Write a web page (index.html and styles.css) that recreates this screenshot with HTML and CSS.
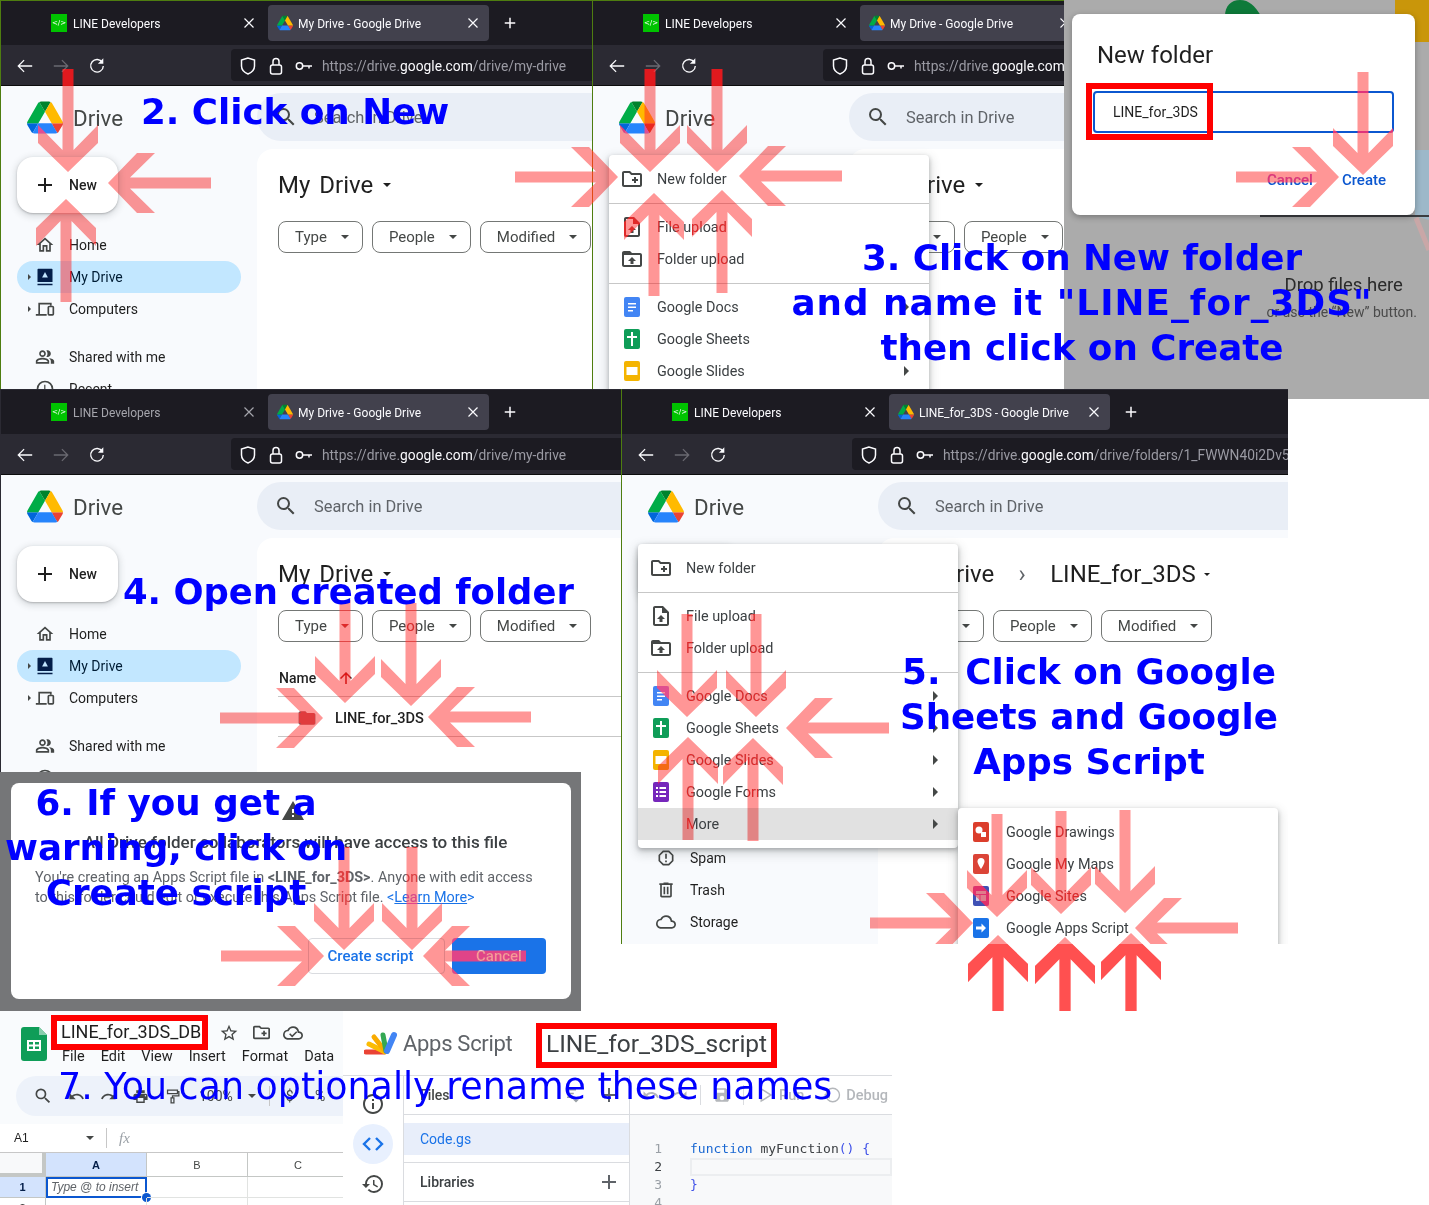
FILE: index.html
```html
<!DOCTYPE html>
<html lang="en">
<head>
    <meta charset="UTF-8">
    <title>LINE for 3DS setup steps</title>
    <link rel="stylesheet" href="styles.css">
</head>
<body>
<svg class="sprite" aria-hidden="true">
    <symbol id="i-drive" viewBox="0 0 87.3 78">
        <path d="m6.6 66.85 3.85 6.65c.8 1.4 1.95 2.5 3.3 3.3l13.75-23.8h-27.5c0 1.55.4 3.1 1.2 4.5z" fill="#0066da"/>
        <path d="m43.65 25-13.75-23.8c-1.35.8-2.5 1.9-3.3 3.3l-25.4 44a9.06 9.06 0 0 0 -1.2 4.5h27.5z" fill="#00ac47"/>
        <path d="m73.55 76.8c1.35-.8 2.5-1.9 3.3-3.3l1.6-2.75 7.65-13.25c.8-1.4 1.2-2.95 1.2-4.5h-27.502l5.852 11.5z" fill="#ea4335"/>
        <path d="m43.65 25 13.75-23.8c-1.35-.8-2.9-1.2-4.5-1.2h-18.5c-1.6 0-3.15.45-4.5 1.2z" fill="#00832d"/>
        <path d="m59.8 53h-32.3l-13.75 23.8c1.35.8 2.9 1.2 4.5 1.2h50.8c1.6 0 3.15-.45 4.5-1.2z" fill="#2684fc"/>
        <path d="m73.4 26.5-12.7-22c-.8-1.4-1.95-2.5-3.3-3.3l-13.75 23.8 16.15 28h27.45c0-1.55-.4-3.1-1.2-4.5z" fill="#ffba00"/>
    </symbol>
    <symbol id="i-back" viewBox="0 0 20 20"><path d="M18 10H3M9 3.5 2.5 10 9 16.5" fill="none" stroke="currentColor" stroke-width="1.4"/></symbol>
    <symbol id="i-forward" viewBox="0 0 20 20"><path d="M2 10h15M11 3.5l6.5 6.5-6.5 6.5" fill="none" stroke="currentColor" stroke-width="1.4"/></symbol>
    <symbol id="i-reload" viewBox="0 0 20 20"><path d="M16 6.2A7 7 0 1 0 17 10" fill="none" stroke="currentColor" stroke-width="1.5"/><path d="M17 1.5v6h-6z" fill="currentColor"/></symbol>
    <symbol id="i-shield" viewBox="0 0 20 20"><path d="M10 2 3.5 4v6c0 4 3 6.600 6.500 8 3.500-1.400 6.500-4 6.500-8V4z" fill="none" stroke="currentColor" stroke-width="1.5"/></symbol>
    <symbol id="i-lock" viewBox="0 0 20 20"><rect x="4.500" y="9" width="11" height="9" rx="2" fill="none" stroke="currentColor" stroke-width="1.500"/><path d="M7 9V5.500a3 3 0 0 1 6 0V9" fill="none" stroke="currentColor" stroke-width="1.500"/></symbol>
    <symbol id="i-key" viewBox="0 0 20 20"><circle cx="5.500" cy="10" r="3.200" fill="none" stroke="currentColor" stroke-width="1.500"/><path d="M9 10h9M15 10v2.500" fill="none" stroke="currentColor" stroke-width="1.500"/></symbol>
    <symbol id="i-x" viewBox="0 0 12 12"><path d="M1.500 1.500l9 9M10.500 1.500l-9 9" fill="none" stroke="currentColor" stroke-width="1.200"/></symbol>
    <symbol id="i-search" viewBox="0 0 24 24"><path d="M15.500 14h-.79l-.28-.27A6.470 6.470 0 0 0 16 9.500 6.500 6.500 0 1 0 9.500 16c1.610 0 3.090-.59 4.230-1.570l.27.28v.79l5 4.990L20.490 19l-4.990-5zm-6 0C7.010 14 5 11.990 5 9.500S7.010 5 9.500 5 14 7.010 14 9.500 11.990 14 9.500 14z"/></symbol>
    <symbol id="i-plus" viewBox="0 0 24 24"><path d="M19 13h-6v6h-2v-6H5v-2h6V5h2v6h6v2z"/></symbol>
    <symbol id="i-up" viewBox="0 0 24 24"><path d="M4 12l1.410 1.410L11 7.830V20h2V7.830l5.580 5.590L20 12l-8-8-8 8z"/></symbol>
    <symbol id="i-home" viewBox="0 0 24 24"><path d="M12 5.690l5 4.500V18h-2v-6H9v6H7v-7.810l5-4.500M12 3L2 12h3v8h6v-6h2v6h6v-8h3L12 3z"/></symbol>
    <symbol id="i-mydrive" viewBox="0 0 24 24"><path d="M4 2h16a1 1 0 0 1 1 1v15H3V3a1 1 0 0 1 1-1zM3 20h18v2H3z"/><path d="M12 6l3.500 6.500h-7z" fill="#c2e7ff"/></symbol>
    <symbol id="i-computers" viewBox="0 0 24 24"><path d="M5 18V5.500h14V8M1 19h13" fill="none" stroke="currentColor" stroke-width="2"/><rect x="16" y="9" width="6" height="10" rx="1" fill="none" stroke="currentColor" stroke-width="2"/></symbol>
    <symbol id="i-people" viewBox="0 0 24 24"><path d="M16.670 13.130C18.040 14.060 19 15.320 19 17v3h4v-3c0-2.180-3.570-3.470-6.330-3.870zM15 12c2.210 0 4-1.790 4-4s-1.790-4-4-4c-.47 0-.91.1-1.330.24C14.500 5.270 15 6.580 15 8s-.5 2.730-1.330 3.760c.42.14.86.24 1.330.24zM9 12c2.210 0 4-1.790 4-4s-1.790-4-4-4-4 1.790-4 4 1.790 4 4 4zm0-6c1.100 0 2 .9 2 2s-.9 2-2 2-2-.9-2-2 .9-2 2-2zM9 13c-2.670 0-8 1.340-8 4v3h16v-3c0-2.660-5.330-4-8-4zm6 5H3v-.99C3.200 16.290 6.300 15 9 15s5.800 1.290 6 2v1z"/></symbol>
    <symbol id="i-recent" viewBox="0 0 24 24"><path d="M12 2a10 10 0 1 0 0 20 10 10 0 0 0 0-20zm0 18a8 8 0 1 1 0-16 8 8 0 0 1 0 16zm.5-13H11v6l5.200 3.200.8-1.300-4.500-2.700z"/></symbol>
    <symbol id="i-star" viewBox="0 0 24 24"><path d="M22 9.240l-7.190-.62L12 2 9.190 8.630 2 9.240l5.460 4.730L5.820 21 12 17.270 18.180 21l-1.630-7.030L22 9.240zM12 15.400l-3.760 2.270 1-4.280-3.320-2.880 4.380-.38L12 6.100l1.710 4.040 4.380.38-3.320 2.880 1 4.280L12 15.400z"/></symbol>
    <symbol id="i-spam" viewBox="0 0 24 24"><path d="M15.730 3H8.270L3 8.270v7.460L8.270 21h7.460L21 15.730V8.270L15.730 3zM19 14.900L14.900 19H9.100L5 14.900V9.100L9.100 5h5.800L19 9.100v5.800zM11 7h2v6h-2zM11 15h2v2h-2z"/></symbol>
    <symbol id="i-trash" viewBox="0 0 24 24"><path d="M15 4V3H9v1H4v2h1v13c0 1.100.9 2 2 2h10c1.100 0 2-.9 2-2V6h1V4h-5zm2 15H7V6h10v13zM9 8h2v9H9zm4 0h2v9h-2z"/></symbol>
    <symbol id="i-cloud" viewBox="0 0 24 24"><path d="M12 6c2.620 0 4.880 1.860 5.390 4.430l.3 1.500 1.530.11A2.980 2.980 0 0 1 22 15c0 1.650-1.350 3-3 3H6c-2.210 0-4-1.790-4-4 0-2.050 1.530-3.760 3.560-3.970l1.070-.11.5-.95A5.469 5.469 0 0 1 12 6m0-2C9.110 4 6.600 5.640 5.350 8.040 2.340 8.360 0 10.910 0 14c0 3.310 2.690 6 6 6h13c2.760 0 5-2.240 5-5 0-2.640-2.050-4.780-4.650-4.960A7.490 7.490 0 0 0 12 4z"/></symbol>
    <symbol id="i-cloud-done" viewBox="0 0 24 24"><path d="M12 6c2.620 0 4.880 1.860 5.390 4.430l.3 1.500 1.530.11A2.980 2.980 0 0 1 22 15c0 1.650-1.350 3-3 3H6c-2.210 0-4-1.790-4-4 0-2.050 1.530-3.760 3.560-3.970l1.070-.11.5-.95A5.469 5.469 0 0 1 12 6m0-2C9.110 4 6.600 5.640 5.350 8.040 2.340 8.360 0 10.910 0 14c0 3.310 2.690 6 6 6h13c2.760 0 5-2.240 5-5 0-2.640-2.050-4.780-4.650-4.960A7.490 7.490 0 0 0 12 4z"/><path d="M8 13l3 3 5.500-5.500" fill="none" stroke="currentColor" stroke-width="1.800"/></symbol>
    <symbol id="i-newfolder" viewBox="2 2 20 20"><path d="M20 6h-8l-2-2H4c-1.110 0-1.990.89-1.990 2L2 18c0 1.110.89 2 2 2h16c1.110 0 2-.89 2-2V8c0-1.110-.89-2-2-2zm0 12H4V6h5.170l2 2H20v10zm-8-4h2v2h2v-2h2v-2h-2v-2h-2v2h-2z"/></symbol>
    <symbol id="i-fileup" viewBox="2 2 20 20"><path fill-rule="evenodd" d="M14 2H6c-1.100 0-2 .9-2 2v16c0 1.100.9 2 2 2h12c1.100 0 2-.9 2-2V8l-6-6zm4 18H6V4h7v5h5v11zM8 15h2.500v3h3v-3H16l-4-4z"/></symbol>
    <symbol id="i-folderup" viewBox="2 2 20 20"><path fill-rule="evenodd" d="M20 6h-8l-2-2H4c-1.100 0-2 .9-2 2v12c0 1.100.9 2 2 2h16c1.100 0 2-.9 2-2V8c0-1.100-.9-2-2-2zm0 12H4V8h16v10zM8 14h2.500v3h3v-3H16l-4-4z"/></symbol>
    <symbol id="i-folder" viewBox="0 0 24 24"><path d="M10 4H4c-1.100 0-2 .9-2 2v12c0 1.100.9 2 2 2h16c1.100 0 2-.9 2-2V8c0-1.100-.9-2-2-2h-8l-2-2z"/></symbol>
    <symbol id="i-docs" viewBox="0 0 16 20"><rect width="16" height="20" rx="2" fill="#4285f4"/><path d="M4 6h8v1.500H4zM4 9.500h8V11H4zM4 13h5v1.500H4z" fill="#fff"/></symbol>
    <symbol id="i-sheets" viewBox="0 0 16 20"><rect width="16" height="20" rx="2" fill="#0f9d58"/><path d="M7 3h2v4h4v2H9v8H7V9H3V7h4z" fill="#fff"/></symbol>
    <symbol id="i-slides" viewBox="0 0 16 20"><rect width="16" height="20" rx="2" fill="#f4b400"/><rect x="2.500" y="6" width="11" height="8" fill="#fff"/></symbol>
    <symbol id="i-forms" viewBox="0 0 16 20"><rect width="16" height="20" rx="2" fill="#7627bb"/><path d="M3 5h2v2H3zM6.500 5H13v2H6.500zM3 9h2v2H3zM6.500 9H13v2H6.500zM3 13h2v2H3zM6.500 13H13v2H6.500z" fill="#fff"/></symbol>
    <symbol id="i-drawings" viewBox="0 0 16 20"><rect width="16" height="20" rx="2" fill="#db3e2c"/><circle cx="6" cy="8" r="3.500" fill="#fff"/><rect x="8" y="10" width="5" height="5" fill="#fff"/></symbol>
    <symbol id="i-maps" viewBox="0 0 16 20"><rect width="16" height="20" rx="2" fill="#db4437"/><path d="M8 4a3.500 3.500 0 0 1 3.500 3.500C11.500 10 8 15 8 15S4.500 10 4.500 7.500A3.500 3.500 0 0 1 8 4z" fill="#fff"/></symbol>
    <symbol id="i-sites" viewBox="0 0 16 20"><rect width="16" height="20" rx="2" fill="#3f51b5"/><path d="M3 5h10v3H3zM3 9h3.500v6H3zM7.500 9H13v6H7.500z" fill="#fff" fill-opacity=".75"/></symbol>
    <symbol id="i-gas" viewBox="0 0 16 20"><rect width="16" height="20" rx="2" fill="#1a73e8"/><path d="M3 8.500h5.500V5.500L13 10l-4.500 4.500v-3H3z" fill="#fff"/></symbol>
    <symbol id="i-warning" viewBox="0 0 24 24"><path d="M1 21h22L12 2 1 21zm12-3h-2v-2h2v2zm0-4h-2v-4h2v4z"/></symbol>
    <symbol id="i-undo" viewBox="0 0 24 24"><path d="M12.500 8c-2.650 0-5.050.99-6.900 2.600L2 7v9h9l-3.620-3.620c1.390-1.160 3.160-1.880 5.120-1.880 3.540 0 6.550 2.310 7.600 5.500l2.370-.78C21.080 11.030 17.150 8 12.500 8z"/></symbol>
    <symbol id="i-redo" viewBox="0 0 24 24"><path d="M18.400 10.600C16.550 8.990 14.150 8 11.500 8c-4.650 0-8.580 3.030-9.960 7.220L3.900 16c1.050-3.190 4.050-5.500 7.600-5.500 1.950 0 3.730.72 5.120 1.880L13 16h9V7l-3.600 3.600z"/></symbol>
    <symbol id="i-print" viewBox="0 0 24 24"><path d="M19 8H5c-1.660 0-3 1.340-3 3v6h4v4h12v-4h4v-6c0-1.660-1.340-3-3-3zm-3 11H8v-5h8v5zm3-7c-.55 0-1-.45-1-1s.45-1 1-1 1 .45 1 1-.45 1-1 1zm-1-9H6v4h12V3z"/></symbol>
    <symbol id="i-paint" viewBox="0 0 24 24"><path d="M5 3h14v5H5zM19 5h2v6h-9v3M10 14h4v7h-4z" fill="none" stroke="currentColor" stroke-width="1.800"/></symbol>
    <symbol id="i-info" viewBox="0 0 24 24"><path d="M11 7h2v2h-2zm0 4h2v6h-2zm1-9C6.480 2 2 6.480 2 12s4.480 10 10 10 10-4.480 10-10S17.520 2 12 2zm0 18c-4.410 0-8-3.590-8-8s3.590-8 8-8 8 3.590 8 8-3.590 8-8 8z"/></symbol>
    <symbol id="i-code" viewBox="0 0 24 24"><path d="M9 6l-6 6 6 6M15 6l6 6-6 6" fill="none" stroke="currentColor" stroke-width="2.400"/></symbol>
    <symbol id="i-history" viewBox="0 0 24 24"><path d="M13 3a9 9 0 0 0-9 9H1l3.890 3.890.07.14L9 12H6c0-3.870 3.130-7 7-7s7 3.130 7 7-3.130 7-7 7c-1.930 0-3.680-.79-4.940-2.060l-1.420 1.420A8.954 8.954 0 0 0 13 21a9 9 0 0 0 0-18zm-1 5v5l4.280 2.540.72-1.210-3.500-2.080V8H12z"/></symbol>
    <symbol id="i-save" viewBox="0 0 24 24"><path d="M17 3H5c-1.100 0-2 .9-2 2v14c0 1.100.9 2 2 2h14c1.100 0 2-.9 2-2V7l-4-4zm-5 16a3 3 0 1 1 0-6 3 3 0 0 1 0 6zm3-10H5V5h10v4z"/></symbol>
    <symbol id="i-sort" viewBox="0 0 24 24"><path d="M4 4h12v2H4zM4 9h9v2H4zM4 14h6v2H4zM12 18h8l-4 4z"/></symbol>
    <symbol id="i-run" viewBox="0 0 24 24"><path d="M7 4v16l13-8z" fill="none" stroke="currentColor" stroke-width="2"/></symbol>
    <symbol id="i-debug" viewBox="0 0 24 24"><circle cx="13" cy="12" r="9" fill="none" stroke="currentColor" stroke-width="1.800"/><path d="M1 12l8-5v10z"/></symbol>
</svg>

<div class="canvas">

    <!-- step 2 -->
    <section class="browser step-new">
        <div class="tabs">
            <div class="tab"><span class="favicon"></span><span class="tab-title">LINE Developers</span><svg class="tab-close"><use href="#i-x"/></svg></div>
            <div class="tab tab-active"><svg class="tab-drive"><use href="#i-drive"/></svg><span class="tab-title">My Drive - Google Drive</span><svg class="tab-close"><use href="#i-x"/></svg></div>
            <svg class="tab-new"><use href="#i-plus"/></svg>
        </div>
        <div class="toolbar">
            <svg class="nav-btn"><use href="#i-back"/></svg>
            <svg class="nav-btn nav-off"><use href="#i-forward"/></svg>
            <svg class="nav-btn"><use href="#i-reload"/></svg>
            <div class="urlbar">
                <svg class="url-icon"><use href="#i-shield"/></svg>
                <svg class="url-icon"><use href="#i-lock"/></svg>
                <svg class="url-icon"><use href="#i-key"/></svg>
                <span class="url">https://drive.<b>google.com</b>/drive/my-drive</span>
            </div>
        </div>
        <div class="drive">
            <div class="brand"><svg class="brand-logo"><use href="#i-drive"/></svg>Drive</div>
            <div class="search"><svg class="ic ic-search"><use href="#i-search"/></svg>Search in Drive</div>
            <aside class="side">
                <div class="new-btn"><svg class="ic-new"><use href="#i-plus"/></svg>New</div>
                <div class="nav-row"><span class="nav-slot"></span><svg class="ic"><use href="#i-home"/></svg>Home</div>
                <div class="nav-row nav-current"><span class="nav-slot"><i class="caret-right"></i></span><svg class="ic"><use href="#i-mydrive"/></svg>My Drive</div>
                <div class="nav-row"><span class="nav-slot"><i class="caret-right"></i></span><svg class="ic"><use href="#i-computers"/></svg>Computers</div>
                <div class="nav-row nav-gap"><span class="nav-slot"></span><svg class="ic"><use href="#i-people"/></svg>Shared with me</div>
                <div class="nav-row"><span class="nav-slot"></span><svg class="ic"><use href="#i-recent"/></svg>Recent</div>
            </aside>
            <main class="main">
                <h2 class="page-title">My Drive<i class="caret-down"></i></h2>
                <div class="chips">
                    <div class="chip">Type<i class="caret-down"></i></div>
                    <div class="chip">People<i class="caret-down"></i></div>
                    <div class="chip">Modified<i class="caret-down"></i></div>
                </div>
            </main>
        </div>
    </section>

    <!-- step 3, menu -->
    <section class="browser step-menu">
        <div class="tabs">
            <div class="tab"><span class="favicon"></span><span class="tab-title">LINE Developers</span><svg class="tab-close"><use href="#i-x"/></svg></div>
            <div class="tab tab-active"><svg class="tab-drive"><use href="#i-drive"/></svg><span class="tab-title">My Drive - Google Drive</span><svg class="tab-close"><use href="#i-x"/></svg></div>
        </div>
        <div class="toolbar">
            <svg class="nav-btn"><use href="#i-back"/></svg>
            <svg class="nav-btn nav-off"><use href="#i-forward"/></svg>
            <svg class="nav-btn"><use href="#i-reload"/></svg>
            <div class="urlbar">
                <svg class="url-icon"><use href="#i-shield"/></svg>
                <svg class="url-icon"><use href="#i-lock"/></svg>
                <svg class="url-icon"><use href="#i-key"/></svg>
                <span class="url">https://drive.<b>google.com</b>/drive/my-drive</span>
            </div>
        </div>
        <div class="drive">
            <div class="brand"><svg class="brand-logo"><use href="#i-drive"/></svg>Drive</div>
            <div class="search"><svg class="ic ic-search"><use href="#i-search"/></svg>Search in Drive</div>
            <aside class="side"></aside>
            <main class="main">
                <h2 class="page-title">My Drive<i class="caret-down"></i></h2>
                <div class="chips">
                    <div class="chip">Type<i class="caret-down"></i></div>
                    <div class="chip">People<i class="caret-down"></i></div>
                </div>
            </main>
        </div>
        <div class="menu">
            <div class="menu-row"><svg class="ic"><use href="#i-newfolder"/></svg>New folder</div>
            <hr class="menu-sep">
            <div class="menu-row"><svg class="ic"><use href="#i-fileup"/></svg>File upload</div>
            <div class="menu-row"><svg class="ic"><use href="#i-folderup"/></svg>Folder upload</div>
            <hr class="menu-sep">
            <div class="menu-row"><svg class="ic"><use href="#i-docs"/></svg>Google Docs<i class="caret-right menu-caret"></i></div>
            <div class="menu-row"><svg class="ic"><use href="#i-sheets"/></svg>Google Sheets<i class="caret-right menu-caret"></i></div>
            <div class="menu-row"><svg class="ic"><use href="#i-slides"/></svg>Google Slides<i class="caret-right menu-caret"></i></div>
        </div>
    </section>

    <!-- step 3, dialog -->
    <section class="dim-panel">
        <svg class="dim-art" viewBox="0 0 365 399">
            <path d="M161 16c0-10 6-16 15-16s15 6 21 16z" fill="#0e7a3a"/>
            <path d="M331 0h34v42h-24c-6 0-10-4-10-10z" fill="#c9960a"/>
            <path d="M351 150l14 0v70l-14-4z" fill="#9db8c9"/>
            <path d="M196 216h170" stroke="#3b3d40" stroke-width="2"/>
            <path d="M352 218l13 32" stroke="#c9a7a7" stroke-width="5"/>
        </svg>
        <div class="drop-hint">
            <div class="drop-title">Drop files here</div>
            <div class="drop-sub">or use the “New” button.</div>
        </div>
        <div class="folder-dialog">
            <h3 class="folder-title">New folder</h3>
            <div class="folder-input">LINE_for_3DS</div>
            <div class="folder-actions"><span>Cancel</span><span>Create</span></div>
        </div>
        <div class="name-box"></div>
    </section>

    <!-- step 4 -->
    <section class="browser step-open">
        <div class="tabs">
            <div class="tab tab-dim"><span class="favicon"></span><span class="tab-title">LINE Developers</span><svg class="tab-close"><use href="#i-x"/></svg></div>
            <div class="tab tab-active"><svg class="tab-drive"><use href="#i-drive"/></svg><span class="tab-title">My Drive - Google Drive</span><svg class="tab-close"><use href="#i-x"/></svg></div>
            <svg class="tab-new"><use href="#i-plus"/></svg>
        </div>
        <div class="toolbar">
            <svg class="nav-btn"><use href="#i-back"/></svg>
            <svg class="nav-btn nav-off"><use href="#i-forward"/></svg>
            <svg class="nav-btn"><use href="#i-reload"/></svg>
            <div class="urlbar">
                <svg class="url-icon"><use href="#i-shield"/></svg>
                <svg class="url-icon"><use href="#i-lock"/></svg>
                <svg class="url-icon"><use href="#i-key"/></svg>
                <span class="url">https://drive.<b>google.com</b>/drive/my-drive</span>
            </div>
        </div>
        <div class="drive">
            <div class="brand"><svg class="brand-logo"><use href="#i-drive"/></svg>Drive</div>
            <div class="search"><svg class="ic ic-search"><use href="#i-search"/></svg>Search in Drive</div>
            <aside class="side">
                <div class="new-btn"><svg class="ic-new"><use href="#i-plus"/></svg>New</div>
                <div class="nav-row"><span class="nav-slot"></span><svg class="ic"><use href="#i-home"/></svg>Home</div>
                <div class="nav-row nav-current"><span class="nav-slot"><i class="caret-right"></i></span><svg class="ic"><use href="#i-mydrive"/></svg>My Drive</div>
                <div class="nav-row"><span class="nav-slot"><i class="caret-right"></i></span><svg class="ic"><use href="#i-computers"/></svg>Computers</div>
                <div class="nav-row nav-gap"><span class="nav-slot"></span><svg class="ic"><use href="#i-people"/></svg>Shared with me</div>
                <div class="nav-row"><span class="nav-slot"></span><svg class="ic"><use href="#i-recent"/></svg>Recent</div>
            </aside>
            <main class="main">
                <h2 class="page-title">My Drive<i class="caret-down"></i></h2>
                <div class="chips">
                    <div class="chip">Type<i class="caret-down"></i></div>
                    <div class="chip">People<i class="caret-down"></i></div>
                    <div class="chip">Modified<i class="caret-down"></i></div>
                </div>
                <div class="list-head">Name<svg class="sort-arrow"><use href="#i-up"/></svg></div>
                <div class="list-row"><svg class="ic ic-folder"><use href="#i-folder"/></svg>LINE_for_3DS</div>
            </main>
        </div>
    </section>

    <!-- step 5 -->
    <section class="browser step-folder">
        <div class="tabs">
            <div class="tab"><span class="favicon"></span><span class="tab-title">LINE Developers</span><svg class="tab-close"><use href="#i-x"/></svg></div>
            <div class="tab tab-active"><svg class="tab-drive"><use href="#i-drive"/></svg><span class="tab-title">LINE_for_3DS - Google Drive</span><svg class="tab-close"><use href="#i-x"/></svg></div>
            <svg class="tab-new"><use href="#i-plus"/></svg>
        </div>
        <div class="toolbar">
            <svg class="nav-btn"><use href="#i-back"/></svg>
            <svg class="nav-btn nav-off"><use href="#i-forward"/></svg>
            <svg class="nav-btn"><use href="#i-reload"/></svg>
            <div class="urlbar">
                <svg class="url-icon"><use href="#i-shield"/></svg>
                <svg class="url-icon"><use href="#i-lock"/></svg>
                <svg class="url-icon"><use href="#i-key"/></svg>
                <span class="url">https://drive.<b>google.com</b>/drive/folders/1_FWWN40i2Dv5dkKq</span>
            </div>
        </div>
        <div class="drive">
            <div class="brand"><svg class="brand-logo"><use href="#i-drive"/></svg>Drive</div>
            <div class="search"><svg class="ic ic-search"><use href="#i-search"/></svg>Search in Drive</div>
            <aside class="side">
                <div class="new-btn"><svg class="ic-new"><use href="#i-plus"/></svg>New</div>
                <div class="nav-row"><span class="nav-slot"></span><svg class="ic"><use href="#i-home"/></svg>Home</div>
                <div class="nav-row nav-current"><span class="nav-slot"></span><svg class="ic"><use href="#i-mydrive"/></svg>My Drive</div>
                <div class="nav-row"><span class="nav-slot"></span><svg class="ic"><use href="#i-computers"/></svg>Computers</div>
                <div class="nav-row nav-gap"><span class="nav-slot"></span><svg class="ic"><use href="#i-people"/></svg>Shared with me</div>
                <div class="nav-row"><span class="nav-slot"></span><svg class="ic"><use href="#i-recent"/></svg>Recent</div>
                <div class="nav-row"><span class="nav-slot"></span><svg class="ic"><use href="#i-star"/></svg>Starred</div>
                <div class="nav-row nav-gap"><span class="nav-slot"></span><svg class="ic"><use href="#i-spam"/></svg>Spam</div>
                <div class="nav-row"><span class="nav-slot"></span><svg class="ic"><use href="#i-trash"/></svg>Trash</div>
                <div class="nav-row"><span class="nav-slot"></span><svg class="ic"><use href="#i-cloud"/></svg>Storage</div>
            </aside>
            <main class="main">
                <h2 class="page-title">My Drive<span class="crumb-sep">›</span>LINE_for_3DS<i class="caret-down caret-small"></i></h2>
                <div class="chips">
                    <div class="chip">Type<i class="caret-down"></i></div>
                    <div class="chip">People<i class="caret-down"></i></div>
                    <div class="chip">Modified<i class="caret-down"></i></div>
                </div>
            </main>
        </div>
        <div class="menu">
            <div class="menu-row"><svg class="ic"><use href="#i-newfolder"/></svg>New folder</div>
            <hr class="menu-sep">
            <div class="menu-row"><svg class="ic"><use href="#i-fileup"/></svg>File upload</div>
            <div class="menu-row"><svg class="ic"><use href="#i-folderup"/></svg>Folder upload</div>
            <hr class="menu-sep">
            <div class="menu-row"><svg class="ic"><use href="#i-docs"/></svg>Google Docs<i class="caret-right menu-caret"></i></div>
            <div class="menu-row"><svg class="ic"><use href="#i-sheets"/></svg>Google Sheets<i class="caret-right menu-caret"></i></div>
            <div class="menu-row"><svg class="ic"><use href="#i-slides"/></svg>Google Slides<i class="caret-right menu-caret"></i></div>
            <div class="menu-row"><svg class="ic"><use href="#i-forms"/></svg>Google Forms<i class="caret-right menu-caret"></i></div>
            <div class="menu-row menu-hover"><span class="ic"></span>More<i class="caret-right menu-caret"></i></div>
        </div>
        <div class="menu submenu">
            <div class="menu-row"><svg class="ic"><use href="#i-drawings"/></svg>Google Drawings</div>
            <div class="menu-row"><svg class="ic"><use href="#i-maps"/></svg>Google My Maps</div>
            <div class="menu-row"><svg class="ic"><use href="#i-sites"/></svg>Google Sites</div>
            <div class="menu-row"><svg class="ic"><use href="#i-gas"/></svg>Google Apps Script</div>
        </div>
    </section>

    <!-- step 6 -->
    <section class="warn-panel">
        <div class="warn-dialog">
            <svg class="warn-icon"><use href="#i-warning"/></svg>
            <h3 class="warn-title">All Drive folder collaborators will have access to this file</h3>
            <p class="warn-text">You're creating an Apps Script file in <b>&lt;LINE_for_3DS&gt;</b>. Anyone with edit access<br>to this folder could edit or execute this Apps Script file. <span class="warn-link">&lt;<u>Learn More</u>&gt;</span></p>
            <div class="warn-actions">
                <div class="btn-outline">Create script</div>
                <div class="btn-fill">Cancel</div>
            </div>
        </div>
    </section>

    <!-- step 7 -->
    <section class="sheet-panel">
        <div class="sheet-head">
            <div class="sheet-top">
                <svg class="sheet-logo" viewBox="0 0 26 34">
                    <path d="M0 3a3 3 0 0 1 3-3h15l8 8v23a3 3 0 0 1-3 3H3a3 3 0 0 1-3-3z" fill="#0f9d58"/>
                    <path d="M18 0l8 8h-8z" fill="#87ceac"/>
                    <path d="M6 13h14v11H6zM8 15v2.500h4V15zM14 15v2.500h4V15zM8 19.500V22h4v-2.500zM14 19.500V22h4v-2.500z" fill="#fff" fill-rule="evenodd"/>
                </svg>
                <div class="sheet-meta">
                    <div class="sheet-title-row">
                        <div class="sheet-name">LINE_for_3DS_DB</div>
                        <svg class="ic"><use href="#i-star"/></svg>
                        <svg class="ic ic-small"><use href="#i-newfolder"/></svg>
                        <svg class="ic"><use href="#i-cloud-done"/></svg>
                    </div>
                    <div class="sheet-menu"><span>File</span><span>Edit</span><span>View</span><span>Insert</span><span>Format</span><span>Data</span></div>
                </div>
            </div>
            <div class="sheet-tools">
                <svg class="tool tool-first"><use href="#i-search"/></svg>
                <svg class="tool"><use href="#i-undo"/></svg>
                <svg class="tool"><use href="#i-redo"/></svg>
                <svg class="tool"><use href="#i-print"/></svg>
                <svg class="tool"><use href="#i-paint"/></svg>
                <span class="tool-zoom">100%</span><i class="caret-down"></i>
                <span class="tool-sep"></span>
                <span class="tool-sym">$</span>
                <span class="tool-sym">%</span>
            </div>
        </div>
        <div class="formula-bar">
            <span class="cell-ref">A1</span><i class="caret-down"></i>
            <span class="formula-sep"></span>
            <span class="formula-fx">fx</span>
        </div>
        <div class="grid">
            <div class="g-corner"></div><div class="g-col g-col-on">A</div><div class="g-col">B</div><div class="g-col">C</div>
            <div class="g-row g-row-on">1</div><div class="g-cell g-cell-on">Type @ to insert<i class="g-handle"></i></div><div class="g-cell"></div><div class="g-cell"></div>
            <div class="g-row">2</div><div class="g-cell"></div><div class="g-cell"></div><div class="g-cell"></div>
        </div>
    </section>

    <section class="script-panel">
        <div class="script-head">
            <svg class="script-logo" viewBox="0 0 34 26">
                <path d="M2 21h18" stroke="#ea4335" stroke-width="5" stroke-linecap="round"/>
                <path d="M5 13l16 8" stroke="#fbbc04" stroke-width="5" stroke-linecap="round"/>
                <path d="M10 6l11 14" stroke="#f9ab00" stroke-width="5" stroke-linecap="round"/>
                <path d="M19 4l3 16" stroke="#34a853" stroke-width="5" stroke-linecap="round"/>
                <path d="M30 4l-7 16" stroke="#4285f4" stroke-width="6" stroke-linecap="round"/>
            </svg>
            <span class="script-brand">Apps Script</span>
            <div class="script-name">LINE_for_3DS_script</div>
        </div>
        <div class="script-body">
            <div class="rail">
                <div class="rail-btn"><svg class="ic"><use href="#i-info"/></svg></div>
                <div class="rail-btn rail-on"><svg class="ic"><use href="#i-code"/></svg></div>
                <div class="rail-btn"><svg class="ic"><use href="#i-history"/></svg></div>
            </div>
            <div class="files">
                <div class="files-head">Files<svg class="files-sort"><use href="#i-sort"/></svg><svg class="files-plus"><use href="#i-plus"/></svg></div>
                <div class="file-row">Code.gs</div>
                <div class="lib-row">Libraries<svg class="files-plus"><use href="#i-plus"/></svg></div>
            </div>
            <div class="editor">
                <div class="editor-tools">
                    <svg class="etool"><use href="#i-undo"/></svg>
                    <svg class="etool"><use href="#i-redo"/></svg>
                    <span class="etool-sep"></span>
                    <svg class="etool"><use href="#i-save"/></svg>
                    <span class="etool-sep"></span>
                    <svg class="etool"><use href="#i-run"/></svg><span class="etool-label">Run</span>
                    <svg class="etool etool-debug"><use href="#i-debug"/></svg><span class="etool-label">Debug</span>
                </div>
                <div class="code">
                    <div class="code-line"><span class="ln">1</span><span class="code-text"><span class="kw">function</span> myFunction<span class="br">()</span> <span class="br">{</span></span></div>
                    <div class="code-line code-current"><span class="ln">2</span><span class="code-text"></span></div>
                    <div class="code-line"><span class="ln">3</span><span class="code-text"><span class="br">}</span></span></div>
                    <div class="code-line"><span class="ln">4</span><span class="code-text"></span></div>
                </div>
            </div>
        </div>
    </section>

    <!-- arrows: tip at the origin, pointing down before the rotate -->
    <svg class="marks marks-base" viewBox="0 0 1429 1205">
        <defs>
            <path id="arrow" d="M-5.500-103H5.500V-22L30-47V-29L0 0-30-29V-47L-5.500-22Z"/>
            <clipPath id="clip-folder"><rect width="1429" height="944"/></clipPath>
            <clipPath id="clip-page"><rect width="1429" height="1011"/></clipPath>
            <clipPath id="clip-below"><rect y="944" width="1429" height="67"/></clipPath>
            <g id="arrows-up">
                <use href="#arrow" transform="translate(998 935) rotate(180)"/>
                <use href="#arrow" transform="translate(1065 937) rotate(180)"/>
                <use href="#arrow" transform="translate(1131 933) rotate(180)"/>
            </g>
        </defs>
        <g id="arrows">
            <use href="#arrow" transform="translate(68 172)"/>
            <use href="#arrow" transform="translate(108 183) rotate(90)"/>
            <use href="#arrow" transform="translate(66 199) rotate(180)"/>
            <use href="#arrow" transform="translate(618 177) rotate(-90)"/>
            <use href="#arrow" transform="translate(650 172)"/>
            <use href="#arrow" transform="translate(717 172)"/>
            <use href="#arrow" transform="translate(739 176) rotate(90)"/>
            <use href="#arrow" transform="translate(654 193) rotate(180)"/>
            <use href="#arrow" transform="translate(722 190) rotate(180)"/>
            <use href="#arrow" transform="translate(1363 175)"/>
            <use href="#arrow" transform="translate(1339 177) rotate(-90)"/>
            <use href="#arrow" transform="translate(345 703)"/>
            <use href="#arrow" transform="translate(411 706)"/>
            <use href="#arrow" transform="translate(323 718) rotate(-90)"/>
            <use href="#arrow" transform="translate(428 717) rotate(90)"/>
            <use href="#arrow" transform="translate(687 717)"/>
            <use href="#arrow" transform="translate(756 717)"/>
            <use href="#arrow" transform="translate(786 728) rotate(90)"/>
            <use href="#arrow" transform="translate(688 737) rotate(180)"/>
            <use href="#arrow" transform="translate(753 738) rotate(180)"/>
            <use href="#arrow" transform="translate(997 917)"/>
            <use href="#arrow" transform="translate(1061 914)"/>
            <use href="#arrow" transform="translate(1125 913)"/>
            <use href="#arrow" transform="translate(344 950)"/>
            <use href="#arrow" transform="translate(412 950)"/>
            <use href="#arrow" transform="translate(324 956) rotate(-90)"/>
            <use href="#arrow" transform="translate(423 956) rotate(90)"/>
            <g clip-path="url(#clip-folder)">
                <use href="#arrow" transform="translate(973 923) rotate(-90)"/>
                <use href="#arrow" transform="translate(1135 928) rotate(90)"/>
            </g>
            <g clip-path="url(#clip-page)"><use href="#arrows-up"/></g>
        </g>
    </svg>
    <svg class="marks marks-glow" viewBox="0 0 1429 1205"><use href="#arrows"/></svg>
    <svg class="marks marks-strong" viewBox="0 0 1429 1205"><g clip-path="url(#clip-below)"><use href="#arrows-up"/></g></svg>

    <div class="note note-2">2. Click on New</div>
    <div class="note note-3">3. Click on New folder<br><span class="note-wide">and name it "LINE_for_3DS"</span><br>then click on Create</div>
    <div class="note note-4">4. Open created folder</div>
    <div class="note note-5">5.  Click on Google<br>Sheets and Google<br>Apps Script</div>
    <div class="note note-6">6. If you get a<br>warning, click on<br>Create script</div>
    <div class="note note-7">7. You can optionally rename these names</div>
</div>
</body>
</html>
```

FILE: styles.css
```css
html, body {
    margin: 0;
    background: #fff;
}

body {
    font-family: Roboto, "Liberation Sans", sans-serif;
    color: #1f1f1f;
}

.sprite {
    position: absolute;
    width: 0;
    height: 0;
}

.canvas {
    position: relative;
    width: 1429px;
    height: 1205px;
    overflow: hidden;
    background: #fff;
}

/* browser window */
.browser {
    position: absolute;
    box-sizing: border-box;
    overflow: hidden;
    background: #2b2a33;
    border: 0 solid #4e7d10;
}

.step-new {
    left: 0;
    top: 0;
    width: 593px;
    height: 389px;
    border-width: 1px 1px 0 1px;
}

.step-menu {
    left: 592px;
    top: 0;
    width: 472px;
    height: 389px;
    border-width: 1px 0 0 1px;
}

.step-open {
    left: 0;
    top: 389px;
    width: 622px;
    height: 384px;
    padding: 1px 0 0 1px;
}

.step-folder {
    left: 621px;
    top: 389px;
    width: 667px;
    height: 555px;
    padding-top: 1px;
    border-left-width: 1px;
}

.tabs {
    display: flex;
    align-items: center;
    height: 44px;
    padding-left: 40px;
    background: #1c1b22;
}

.tab {
    display: flex;
    align-items: center;
    flex: none;
    box-sizing: border-box;
    width: 221px;
    height: 36px;
    margin-right: 6px;
    padding: 0 7px 0 10px;
    border-radius: 4px;
    font-size: 12px;
    color: #fbfbfe;
}

.tab-active {
    background: #42414d;
    padding: 0 10px 0 9px;
}

.tab-dim {
    color: #a5a5ac;
}

.favicon {
    position: relative;
    flex: none;
    width: 16px;
    height: 18px;
    margin-right: 6px;
    background: #00c300;
}

.favicon::after {
    content: "</>";
    position: absolute;
    inset: 0;
    font: 7px/18px "DejaVu Sans", sans-serif;
    color: #fff;
    text-align: center;
}

.tab-drive {
    flex: none;
    width: 16px;
    height: 16px;
    margin-right: 5px;
}

.tab-title {
    flex: 1;
    margin-top: 2px;
    white-space: nowrap;
}

.tab-close {
    flex: none;
    width: 12px;
    height: 12px;
}

.tab-new {
    flex: none;
    width: 18px;
    height: 18px;
    margin-left: 6px;
    fill: #fbfbfe;
    color: #fbfbfe;
}

.toolbar {
    display: flex;
    align-items: center;
    height: 40px;
    padding-left: 15px;
    border-bottom: 1px solid #0c0c0d;
    color: #fbfbfe;
}

.nav-btn {
    flex: none;
    width: 18px;
    height: 18px;
    margin: 2px 18px 0 0;
}

.nav-off {
    color: #6a6971;
}

.urlbar {
    display: flex;
    align-items: center;
    flex: 1;
    height: 32px;
    margin-left: 107px;
    padding-left: 7px;
    background: #1c1b22;
    border-radius: 4px 0 0 4px;
    overflow: hidden;
    white-space: nowrap;
}

.url-icon {
    flex: none;
    width: 20px;
    height: 20px;
    margin: 2px 8px 0 0;
}

.url {
    margin-top: 2px;
    font-size: 13.8px;
    color: #9a9aa3;
}

.url b {
    font-weight: 400;
    color: #fbfbfe;
}

/* drive page */
.drive {
    display: grid;
    grid-template-columns: 256px 1fr;
    grid-template-rows: 63px 1fr;
    height: 600px;
    background: #f8fafd;
    color: #1f1f1f;
}

.brand {
    display: flex;
    align-items: center;
    padding-left: 26px;
    font-size: 22.3px;
    color: #444746;
}

.brand-logo {
    width: 36px;
    height: 33px;
    margin-right: 10px;
}

.search {
    display: flex;
    align-items: center;
    height: 48px;
    margin-top: 7px;
    border-radius: 24px 0 0 24px;
    background: #e9eef6;
    font-size: 16.4px;
    color: #5f6368;
}

.ic {
    flex: none;
    width: 20px;
    height: 20px;
    fill: #444746;
    color: #444746;
}

.ic-search {
    width: 24px;
    height: 24px;
    margin: 0 16px 0 17px;
}

.side {
    display: flex;
    flex-direction: column;
    align-items: flex-start;
    font-size: 14px;
}

.new-btn {
    display: flex;
    align-items: center;
    box-sizing: border-box;
    width: 101px;
    height: 56px;
    margin: 8px 0 16px 16px;
    padding-left: 16px;
    border-radius: 16px;
    background: #fff;
    box-shadow: 0 1px 2px rgba(60, 64, 67, .3), 0 2px 6px 2px rgba(60, 64, 67, .15);
    font-weight: 500;
    color: #1f1f1f;
}

.ic-new {
    width: 24px;
    height: 24px;
    margin-right: 12px;
    fill: #1f1f1f;
}

.nav-row {
    display: flex;
    align-items: center;
    flex: none;
    width: 224px;
    height: 32px;
    margin-left: 16px;
    border-radius: 16px;
}

.nav-row .ic {
    margin-right: 14px;
}

.nav-current {
    background: #c2e7ff;
    color: #001d35;
}

.nav-current .ic {
    fill: #041e49;
}

.nav-gap {
    margin-top: 16px;
}

.nav-slot {
    display: flex;
    justify-content: center;
    flex: none;
    box-sizing: border-box;
    width: 18px;
    padding-left: 6px;
}

.caret-right {
    width: 0;
    height: 0;
    border-left: 3px solid #444746;
    border-top: 3px solid transparent;
    border-bottom: 3px solid transparent;
}

.caret-down {
    display: inline-block;
    width: 0;
    height: 0;
    border-top: 4px solid #444746;
    border-left: 4px solid transparent;
    border-right: 4px solid transparent;
}

.main {
    padding: 20px 0 0 21px;
    border-radius: 16px 0 0 0;
    background: #fff;
    white-space: nowrap;
}

.page-title {
    display: flex;
    align-items: center;
    margin: 0;
    font-size: 24px;
    font-weight: 400;
    line-height: 32px;
    word-spacing: 3px;
    color: #1f1f1f;
}

.page-title .caret-down {
    margin-left: 10px;
    border-top-color: #1f1f1f;
}

.page-title .caret-small {
    margin-left: 8px;
    border-top-width: 3px;
    border-left-width: 3px;
    border-right-width: 3px;
}

.crumb-sep {
    width: 56px;
    text-align: center;
    color: #5f6368;
}

.chips {
    display: flex;
    gap: 9px;
    margin-top: 20px;
}

.chip {
    display: flex;
    align-items: center;
    flex: none;
    gap: 14px;
    box-sizing: border-box;
    height: 32px;
    padding: 0 13px 0 16px;
    border: 1px solid #747775;
    border-radius: 8px;
    font-size: 15px;
    color: #444746;
}

.list-head {
    display: flex;
    align-items: center;
    box-sizing: border-box;
    width: 1000px;
    height: 55px;
    padding: 18px 0 0 1px;
    border-bottom: 1px solid #c7c7c7;
    font-size: 14px;
    font-weight: 500;
}

.sort-arrow {
    flex: none;
    width: 18px;
    height: 18px;
    margin-left: 21px;
    fill: #1f1f1f;
}

.list-row {
    display: flex;
    align-items: center;
    box-sizing: border-box;
    width: 1000px;
    height: 40px;
    padding: 2px 0 0 19px;
    border-bottom: 1px solid #c7c7c7;
    font-size: 14.6px;
    font-weight: 500;
}

.ic-folder {
    margin-right: 18px;
    fill: #5f6368;
}

/* new menu */
.menu {
    position: absolute;
    left: 16px;
    top: 154px;
    box-sizing: border-box;
    width: 320px;
    padding: 8px 0;
    border-radius: 4px;
    background: #fff;
    box-shadow: 0 2px 4px rgba(60, 64, 67, .35), 0 4px 10px 3px rgba(60, 64, 67, .15);
    font-size: 14.4px;
    color: #3c4043;
}

.step-folder .menu {
    top: 155px;
}

.step-folder .submenu {
    left: 336px;
    top: 419px;
}

.menu-row {
    display: flex;
    align-items: center;
    height: 32px;
    padding-left: 13px;
}

.menu-row .ic {
    margin-right: 15px;
}

.menu-hover {
    background: #e1e1e1;
}

.menu-caret {
    margin-left: auto;
    margin-right: 20px;
    border-left-width: 5px;
    border-top-width: 5px;
    border-bottom-width: 5px;
}

.menu-sep {
    height: 1px;
    margin: 8px 0 7px;
    border: 0;
    background: #c7c7c7;
}

/* new folder dialog */
.dim-panel {
    position: absolute;
    left: 1064px;
    top: 0;
    width: 365px;
    height: 399px;
    background: #ababab;
    overflow: hidden;
}

.dim-art {
    position: absolute;
    inset: 0;
    width: 365px;
    height: 399px;
}

.drop-hint {
    position: absolute;
    right: 12px;
    top: 274px;
    text-align: center;
    color: #2b2b2b;
    white-space: nowrap;
}

.drop-title {
    padding-left: 4px;
    font-size: 18.5px;
    line-height: 22px;
}

.drop-sub {
    margin-top: 9px;
    font-size: 14px;
    line-height: 15px;
    color: #4a4a4a;
}

.folder-dialog {
    position: absolute;
    left: 8px;
    top: 14px;
    box-sizing: border-box;
    width: 343px;
    height: 201px;
    padding: 25px 21px 0 25px;
    border-radius: 8px;
    background: #fff;
    box-shadow: 0 2px 6px rgba(0, 0, 0, .3);
}

.folder-title {
    margin: 0;
    font-size: 24px;
    font-weight: 400;
    line-height: 32px;
}

.folder-input {
    box-sizing: border-box;
    height: 42px;
    margin: 20px 0 0 -4px;
    padding: 0 18px;
    border: 2px solid #0b57d0;
    border-radius: 4px;
    font-size: 14px;
    line-height: 38px;
}

.folder-actions {
    display: flex;
    justify-content: flex-end;
    gap: 29px;
    margin: 38px 8px 0 0;
    font-size: 15px;
    font-weight: 500;
    color: #0b57d0;
}

.name-box {
    position: absolute;
    left: 22px;
    top: 83px;
    box-sizing: border-box;
    width: 127px;
    height: 57px;
    border: 6px solid #f00;
}

/* apps script warning */
.warn-panel {
    position: absolute;
    left: 0;
    top: 772px;
    box-sizing: border-box;
    width: 581px;
    height: 239px;
    padding: 11px 10px 12px 11px;
    background: #757678;
}

.warn-dialog {
    box-sizing: border-box;
    height: 216px;
    padding: 16px 24px 0;
    border-radius: 8px;
    background: #fff;
    color: #3c4043;
}

.warn-icon {
    display: block;
    width: 24px;
    height: 24px;
    margin: 0 auto 0 246px;
    fill: #444746;
}

.warn-title {
    margin: 9px 0 0;
    padding-left: 9px;
    font-size: 17px;
    font-weight: 500;
    line-height: 20px;
    text-align: center;
    white-space: nowrap;
}

.warn-text {
    margin: 16px 0 0;
    font-size: 14.4px;
    line-height: 20px;
    color: #5f6368;
    white-space: nowrap;
}

.warn-text b {
    font-weight: 700;
}

.warn-link {
    color: #1a73e8;
}

.warn-actions {
    display: flex;
    justify-content: flex-end;
    gap: 7px;
    margin-top: 30px;
    padding-right: 1px;
    font-size: 15px;
    font-weight: 500;
}

.btn-outline,
.btn-fill {
    box-sizing: border-box;
    height: 36px;
    border-radius: 4px;
    text-align: center;
    line-height: 34px;
}

.btn-outline {
    width: 137px;
    padding-right: 12px;
    border: 1px solid #dadce0;
    color: #1a73e8;
}

.btn-fill {
    width: 94px;
    background: #1a73e8;
    color: #fff;
    line-height: 36px;
}

/* sheets */
.sheet-panel {
    position: absolute;
    left: 0;
    top: 1011px;
    width: 343px;
    height: 194px;
    overflow: hidden;
    background: #fff;
}

.sheet-head {
    height: 113px;
    background: #f9fbfd;
}

.sheet-top {
    display: flex;
    padding: 4px 0 0 21px;
}

.sheet-logo {
    flex: none;
    width: 26px;
    height: 34px;
    margin: 12px 4px 0 0;
}

.sheet-title-row {
    display: flex;
    align-items: center;
    gap: 12px;
}

.ic-small {
    width: 17px;
    height: 17px;
    margin: 0 1px 0 2px;
}

.sheet-name {
    box-sizing: border-box;
    width: 157px;
    height: 35px;
    margin-right: -1px;
    padding-left: 4px;
    border: 6px solid #f00;
    background: #fff;
    font-size: 18px;
    line-height: 21px;
    white-space: nowrap;
}

.sheet-menu {
    display: flex;
    gap: 16px;
    height: 14px;
    padding-left: 11px;
    font-size: 14.5px;
    line-height: 14px;
    white-space: nowrap;
}

.sheet-tools {
    display: flex;
    align-items: center;
    height: 40px;
    margin: 12px 0 0 16px;
    padding-left: 17px;
    border-radius: 20px 0 0 20px;
    background: #edf2fa;
    color: #444746;
}

.tool {
    flex: none;
    width: 17px;
    height: 17px;
    margin-right: 15px;
    fill: #444746;
}

.tool-first {
    width: 20px;
    height: 20px;
    margin-right: 15px;
}

.tool-zoom {
    margin: 0 15px 0 3px;
    font-size: 14px;
}

.tool-sep {
    width: 1px;
    height: 20px;
    margin: 0 12px 0 13px;
    background: #c7c7c7;
}

.tool-sym {
    width: 16px;
    margin-right: 15px;
    font-size: 14px;
    text-align: center;
}

.formula-bar {
    display: flex;
    align-items: center;
    box-sizing: border-box;
    height: 29px;
    padding-left: 14px;
    border-bottom: 1px solid #c7c7c7;
}

.cell-ref {
    width: 72px;
    font-size: 12px;
    font-family: "Liberation Sans", sans-serif;
}

.formula-sep {
    width: 1px;
    height: 20px;
    margin: 0 12px 0 12px;
    background: #c7c7c7;
}

.formula-fx {
    font: italic 15px "Liberation Serif", serif;
    color: #9aa0a6;
}

.grid {
    display: grid;
    grid-template-columns: 46px 101px 101px 101px;
    grid-template-rows: 24px 21px 21px;
    font: 11px "Liberation Sans", sans-serif;
    color: #444746;
}

.g-corner {
    border-right: 4px solid #c4c7c5;
    border-bottom: 4px solid #c4c7c5;
    background: #f8f9fa;
}

.g-col,
.g-row {
    display: flex;
    align-items: center;
    justify-content: center;
    border-right: 1px solid #c4c7c5;
    border-bottom: 1px solid #c4c7c5;
    font-weight: 700;
}

.g-col {
    font-weight: 400;
}

.g-col-on,
.g-row-on {
    background: #d3e3fd;
    color: #041e49;
    font-weight: 700;
}

.g-cell {
    position: relative;
    box-sizing: border-box;
    border-right: 1px solid #e1e3e1;
    border-bottom: 1px solid #e1e3e1;
}

.g-cell-on {
    padding-left: 3px;
    border: 2px solid #0b57d0;
    font-size: 12px;
    font-style: italic;
    line-height: 17px;
    color: #5f6368;
    white-space: nowrap;
}

.g-handle {
    position: absolute;
    right: -6px;
    bottom: -6px;
    width: 9px;
    height: 9px;
    border-radius: 50%;
    background: #0b57d0;
    box-shadow: 0 0 0 1px #fff;
}

/* apps script */
.script-panel {
    position: absolute;
    left: 343px;
    top: 1011px;
    width: 549px;
    height: 194px;
    overflow: hidden;
    background: #fff;
    font-size: 14px;
}

.script-head {
    display: flex;
    align-items: center;
    box-sizing: border-box;
    height: 65px;
    padding-left: 21px;
    border-bottom: 1px solid #dadce0;
}

.script-logo {
    flex: none;
    width: 34px;
    height: 26px;
    margin: 1px 5px 0 0;
}

.script-brand {
    width: 110px;
    font-size: 22px;
    letter-spacing: -.3px;
    color: #5f6368;
    white-space: nowrap;
}

.script-name {
    box-sizing: border-box;
    height: 45px;
    margin: 5px 0 0 23px;
    padding: 0 4px;
    border: 6px solid #f00;
    font-size: 24.5px;
    line-height: 29px;
    color: #3c4043;
    white-space: nowrap;
}

.script-body {
    display: grid;
    grid-template-columns: 61px 226px 1fr;
}

.rail {
    box-sizing: border-box;
    height: 130px;
    padding-top: 8px;
    border-right: 1px solid #dadce0;
}

.rail-btn {
    display: flex;
    align-items: center;
    justify-content: center;
    width: 40px;
    height: 40px;
    margin-left: 10px;
    border-radius: 50%;
}

.rail-btn .ic {
    width: 24px;
    height: 24px;
}

.rail-on {
    background: #e8f0fe;
}

.rail-on .ic {
    color: #1a73e8;
}

.files {
    border-right: 1px solid #dadce0;
}

.files-head {
    display: flex;
    align-items: center;
    box-sizing: border-box;
    height: 39px;
    padding-left: 16px;
    border-bottom: 1px solid #dadce0;
    color: #444746;
    font-weight: 500;
}

.files-sort {
    width: 18px;
    height: 18px;
    margin: 0 15px 0 auto;
    fill: #9aa0a6;
}

.files-plus {
    width: 24px;
    height: 24px;
    margin: 0 8px 0 0;
    fill: #5f6368;
}

.file-row {
    height: 32px;
    margin-top: 8px;
    padding-left: 16px;
    background: #e8eefa;
    line-height: 32px;
    color: #1a73e8;
}

.lib-row {
    display: flex;
    align-items: center;
    justify-content: space-between;
    box-sizing: border-box;
    height: 40px;
    margin-top: 7px;
    padding-left: 16px;
    border-top: 1px solid #dadce0;
    border-bottom: 1px solid #dadce0;
    font-weight: 500;
    color: #3c4043;
}

.editor {
    background: #f8f9fa;
}

.editor-tools {
    display: flex;
    align-items: center;
    box-sizing: border-box;
    height: 39px;
    padding-left: 12px;
    border-bottom: 1px solid #dadce0;
    background: #fff;
    color: #b4b7bb;
    white-space: nowrap;
    font-weight: 500;
}

.etool {
    flex: none;
    width: 18px;
    height: 18px;
    margin-right: 10px;
    fill: #b4b7bb;
}

.etool-sep {
    width: 1px;
    height: 20px;
    margin: 0 12px 0 2px;
    background: #dadce0;
}

.etool-label {
    margin-left: -5px;
    font-size: 14.5px;
}

.etool-debug {
    margin-left: 19px;
}

.code {
    padding-top: 25px;
    font: 13px/18px "DejaVu Sans Mono", monospace;
    color: #3c4043;
}

.code-line {
    display: flex;
    height: 18px;
}

.ln {
    width: 60px;
    padding-right: 28px;
    box-sizing: border-box;
    text-align: right;
    color: #9aa0a6;
}

.code-current .ln {
    color: #3c4043;
}

.code-text {
    flex: 1;
    box-sizing: border-box;
    white-space: pre;
}

.code-current .code-text {
    border: 2px solid #eceef0;
}

.kw {
    color: #1967d2;
}

.br {
    color: #3f51e8;
}

/* arrows */
.marks {
    position: absolute;
    left: 0;
    top: 0;
    width: 1429px;
    height: 1205px;
    pointer-events: none;
}

.marks-base {
    fill: #ff9696;
    mix-blend-mode: multiply;
}

.marks-glow {
    fill: #e01414;
    mix-blend-mode: lighten;
}

.marks-strong {
    fill: #ff5050;
}

/* step captions */
.note {
    position: absolute;
    font-family: "DejaVu Sans", sans-serif;
    font-size: 35.7px;
    font-weight: 700;
    line-height: 45px;
    color: #00f;
    text-align: center;
    white-space: pre;
}

.note-wide {
    letter-spacing: 1.07px;
}

.note-2 {
    left: 141px;
    top: 89px;
}

.note-3 {
    left: 782px;
    width: 600px;
    top: 235px;
}

.note-4 {
    left: 123px;
    top: 569px;
    font-size: 35.4px;
}

.note-5 {
    left: 889px;
    width: 400px;
    top: 649px;
}

.note-6 {
    left: -24px;
    width: 400px;
    top: 780px;
}

.note-7 {
    left: 58px;
    top: 1064px;
    font-size: 36.4px;
    font-weight: 400;
}
```
